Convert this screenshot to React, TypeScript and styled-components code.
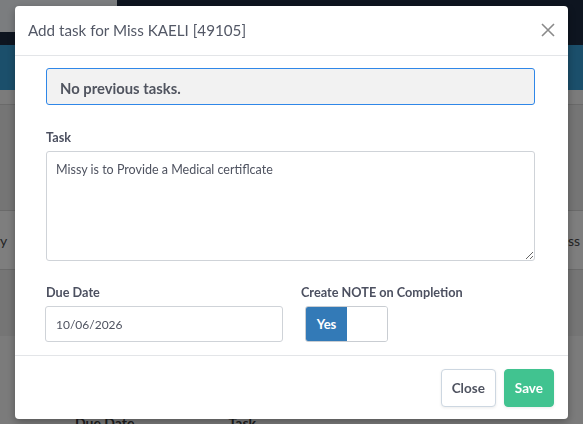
import styled, { createGlobalStyle } from "styled-components";

const GlobalStyle = createGlobalStyle`
  html, body {
    margin: 0;
    padding: 0;
    width: 583px;
    height: 424px;
    overflow: hidden;
    font-family: "Lato", "Open Sans", sans-serif;
  }
  * { box-sizing: border-box; }
`;

/* ---------- page behind the modal ---------- */

const Page = styled.div`
  width: 583px;
  height: 424px;
  display: flex;
  flex-direction: column;
  background: #f6f6f6;
`;

const TopBar = styled.div`
  height: 32px;
  display: flex;
  background: #1c2a40;
`;

const LogoArea = styled.div`
  width: 117px;
  background: #f6fbff;
`;

const TopStrip = styled.div`
  height: 13px;
  background: #1c2a40;
`;

const NavBar = styled.div`
  height: 45px;
  background: #369ed6;
`;

const Band = styled.div<{ $h: number; $bg: string; $line?: boolean }>`
  height: ${(p) => p.$h}px;
  background: ${(p) => p.$bg};
  border-bottom: ${(p) => (p.$line ? "1px solid #d4d4d4" : "none")};
  display: flex;
  align-items: center;
  justify-content: space-between;
  padding: 0 3px 0 0;
  color: #4a4a4a;
  font-size: 14px;
`;

const EdgeText = styled.span<{ $left?: boolean }>`
  margin-left: ${(p) => (p.$left ? "-5px" : "0")};
`;

const TableHead = styled.div`
  flex: 1;
  background: #f6f6f6;
  display: flex;
  align-items: flex-end;
  gap: 94px;
  padding-left: 75px;
  font-size: 14px;
  font-weight: 700;
  color: #3c3c3c;
  line-height: 1;
  margin-bottom: -6px;
`;

const Overlay = styled.div`
  position: fixed;
  inset: 0;
  background: rgba(0, 0, 0, 0.5);
  display: flex;
  justify-content: center;
  align-items: flex-start;
  padding-top: 6px;
`;

/* ---------- modal ---------- */

const Modal = styled.div`
  width: 553px;
  background: #fff;
  border-radius: 4px;
  box-shadow: 0 3px 9px rgba(0, 0, 0, 0.3);
  color: #4f5360;
`;

const Header = styled.div`
  height: 50px;
  display: flex;
  align-items: center;
  justify-content: space-between;
  padding: 0 12px 1px 13px;
  border-bottom: 1px solid #e3e5e8;
`;

const Title = styled.h4`
  margin: 0;
  font-size: 15.2px;
  font-weight: 400;
  color: #535866;
`;

const CloseX = styled.button`
  border: 0;
  background: none;
  padding: 0;
  width: 16px;
  height: 16px;
  display: flex;
  cursor: pointer;
`;

const Body = styled.div`
  padding: 12px 33px 13px 31px;
  border-bottom: 1px solid #e3e5e8;
`;

const Notice = styled.div`
  height: 37px;
  display: flex;
  align-items: center;
  padding: 2px 13px 0;
  border: 1px solid #2f87e8;
  border-radius: 3px;
  background: #f2f2f2;
  font-size: 14.8px;
  font-weight: 700;
  color: #50545f;
`;

const Field = styled.div`
  display: flex;
  flex-direction: column;
`;

const Label = styled.label<{ $top: number }>`
  margin-top: ${(p) => p.$top}px;
  margin-bottom: 5px;
  font-size: 12.7px;
  font-weight: 700;
  color: #4c5060;
  line-height: 18px;
`;

const TextArea = styled.textarea`
  height: 110px;
  resize: vertical;
  padding: 10px 9px;
  border: 1px solid #cfd3d8;
  border-radius: 3px;
  font-family: inherit;
  font-size: 12.5px;
  color: #4f5360;
  outline: none;
`;

const Row = styled.div`
  display: grid;
  grid-template-columns: 237px 1fr;
  column-gap: 18px;
`;

const DateInput = styled.input`
  height: 36px;
  margin-left: -1px;
  padding: 0 10px;
  border: 1px solid #cfd3d8;
  border-radius: 3px;
  font-family: inherit;
  font-size: 12px;
  color: #4f5360;
  outline: none;
`;

const Toggle = styled.div`
  width: 83px;
  height: 36px;
  margin-left: 4px;
  display: flex;
  border: 1px solid #c9cdd2;
  border-radius: 3px;
  overflow: hidden;
`;

const ToggleSide = styled.div<{ $on?: boolean }>`
  width: ${(p) => (p.$on ? "41px" : "auto")};
  flex: ${(p) => (p.$on ? "none" : "1")};
  display: flex;
  align-items: center;
  justify-content: center;
  background: ${(p) => (p.$on ? "#337ab7" : "#fff")};
  color: #fff;
  font-size: 13px;
  font-weight: 700;
`;

const Footer = styled.div`
  display: flex;
  justify-content: flex-end;
  gap: 8px;
  padding: 13px 14px 12px;
`;

const Button = styled.button<{ $primary?: boolean }>`
  height: 38px;
  padding: 0 10px;
  border-radius: 4px;
  border: 1px solid ${(p) => (p.$primary ? "#41c390" : "#cdd7e1")};
  background: ${(p) => (p.$primary ? "#41c390" : "#fff")};
  color: ${(p) => (p.$primary ? "#fff" : "#4f5360")};
  font-family: inherit;
  font-size: 13.5px;
  font-weight: 700;
  box-shadow: 0 1px 3px rgba(0, 0, 0, 0.08);
`;

export default function App() {
  return (
    <>
      <GlobalStyle />
      <Page>
        <TopBar>
          <LogoArea />
        </TopBar>
        <TopStrip />
        <NavBar />
        <Band $h={15} $bg="#f7f7f7" $line />
        <Band $h={106} $bg="#ebebeb" $line />
        <Band $h={59} $bg="#fcfcfc" $line>
          <EdgeText $left>ry</EdgeText>
          <EdgeText>ss</EdgeText>
        </Band>
        <Band $h={66} $bg="#eaeaea" />
        <TableHead>
          <span>Due Date</span>
          <span>Task</span>
        </TableHead>
      </Page>
      <Overlay>
        <Modal>
          <Header>
            <Title>Add task for Miss KAELI [49105]</Title>
            <CloseX aria-label="Close">
              <svg width="16" height="16" viewBox="0 0 16 16">
                <path d="M2 2 L14 14 M14 2 L2 14" stroke="#8a8a8a" strokeWidth="1.6" fill="none" />
              </svg>
            </CloseX>
          </Header>
          <Body>
            <Notice>No previous tasks.</Notice>
            <Field>
              <Label $top={23}>Task</Label>
              <TextArea defaultValue="Missy is to Provide a Medical certiflcate" />
            </Field>
            <Row>
              <Field>
                <Label $top={22}>Due Date</Label>
                <DateInput defaultValue="10/06/2026" />
              </Field>
              <Field>
                <Label $top={22}>Create NOTE on Completion</Label>
                <Toggle>
                  <ToggleSide $on>Yes</ToggleSide>
                  <ToggleSide />
                </Toggle>
              </Field>
            </Row>
          </Body>
          <Footer>
            <Button>Close</Button>
            <Button $primary>Save</Button>
          </Footer>
        </Modal>
      </Overlay>
    </>
  );
}
